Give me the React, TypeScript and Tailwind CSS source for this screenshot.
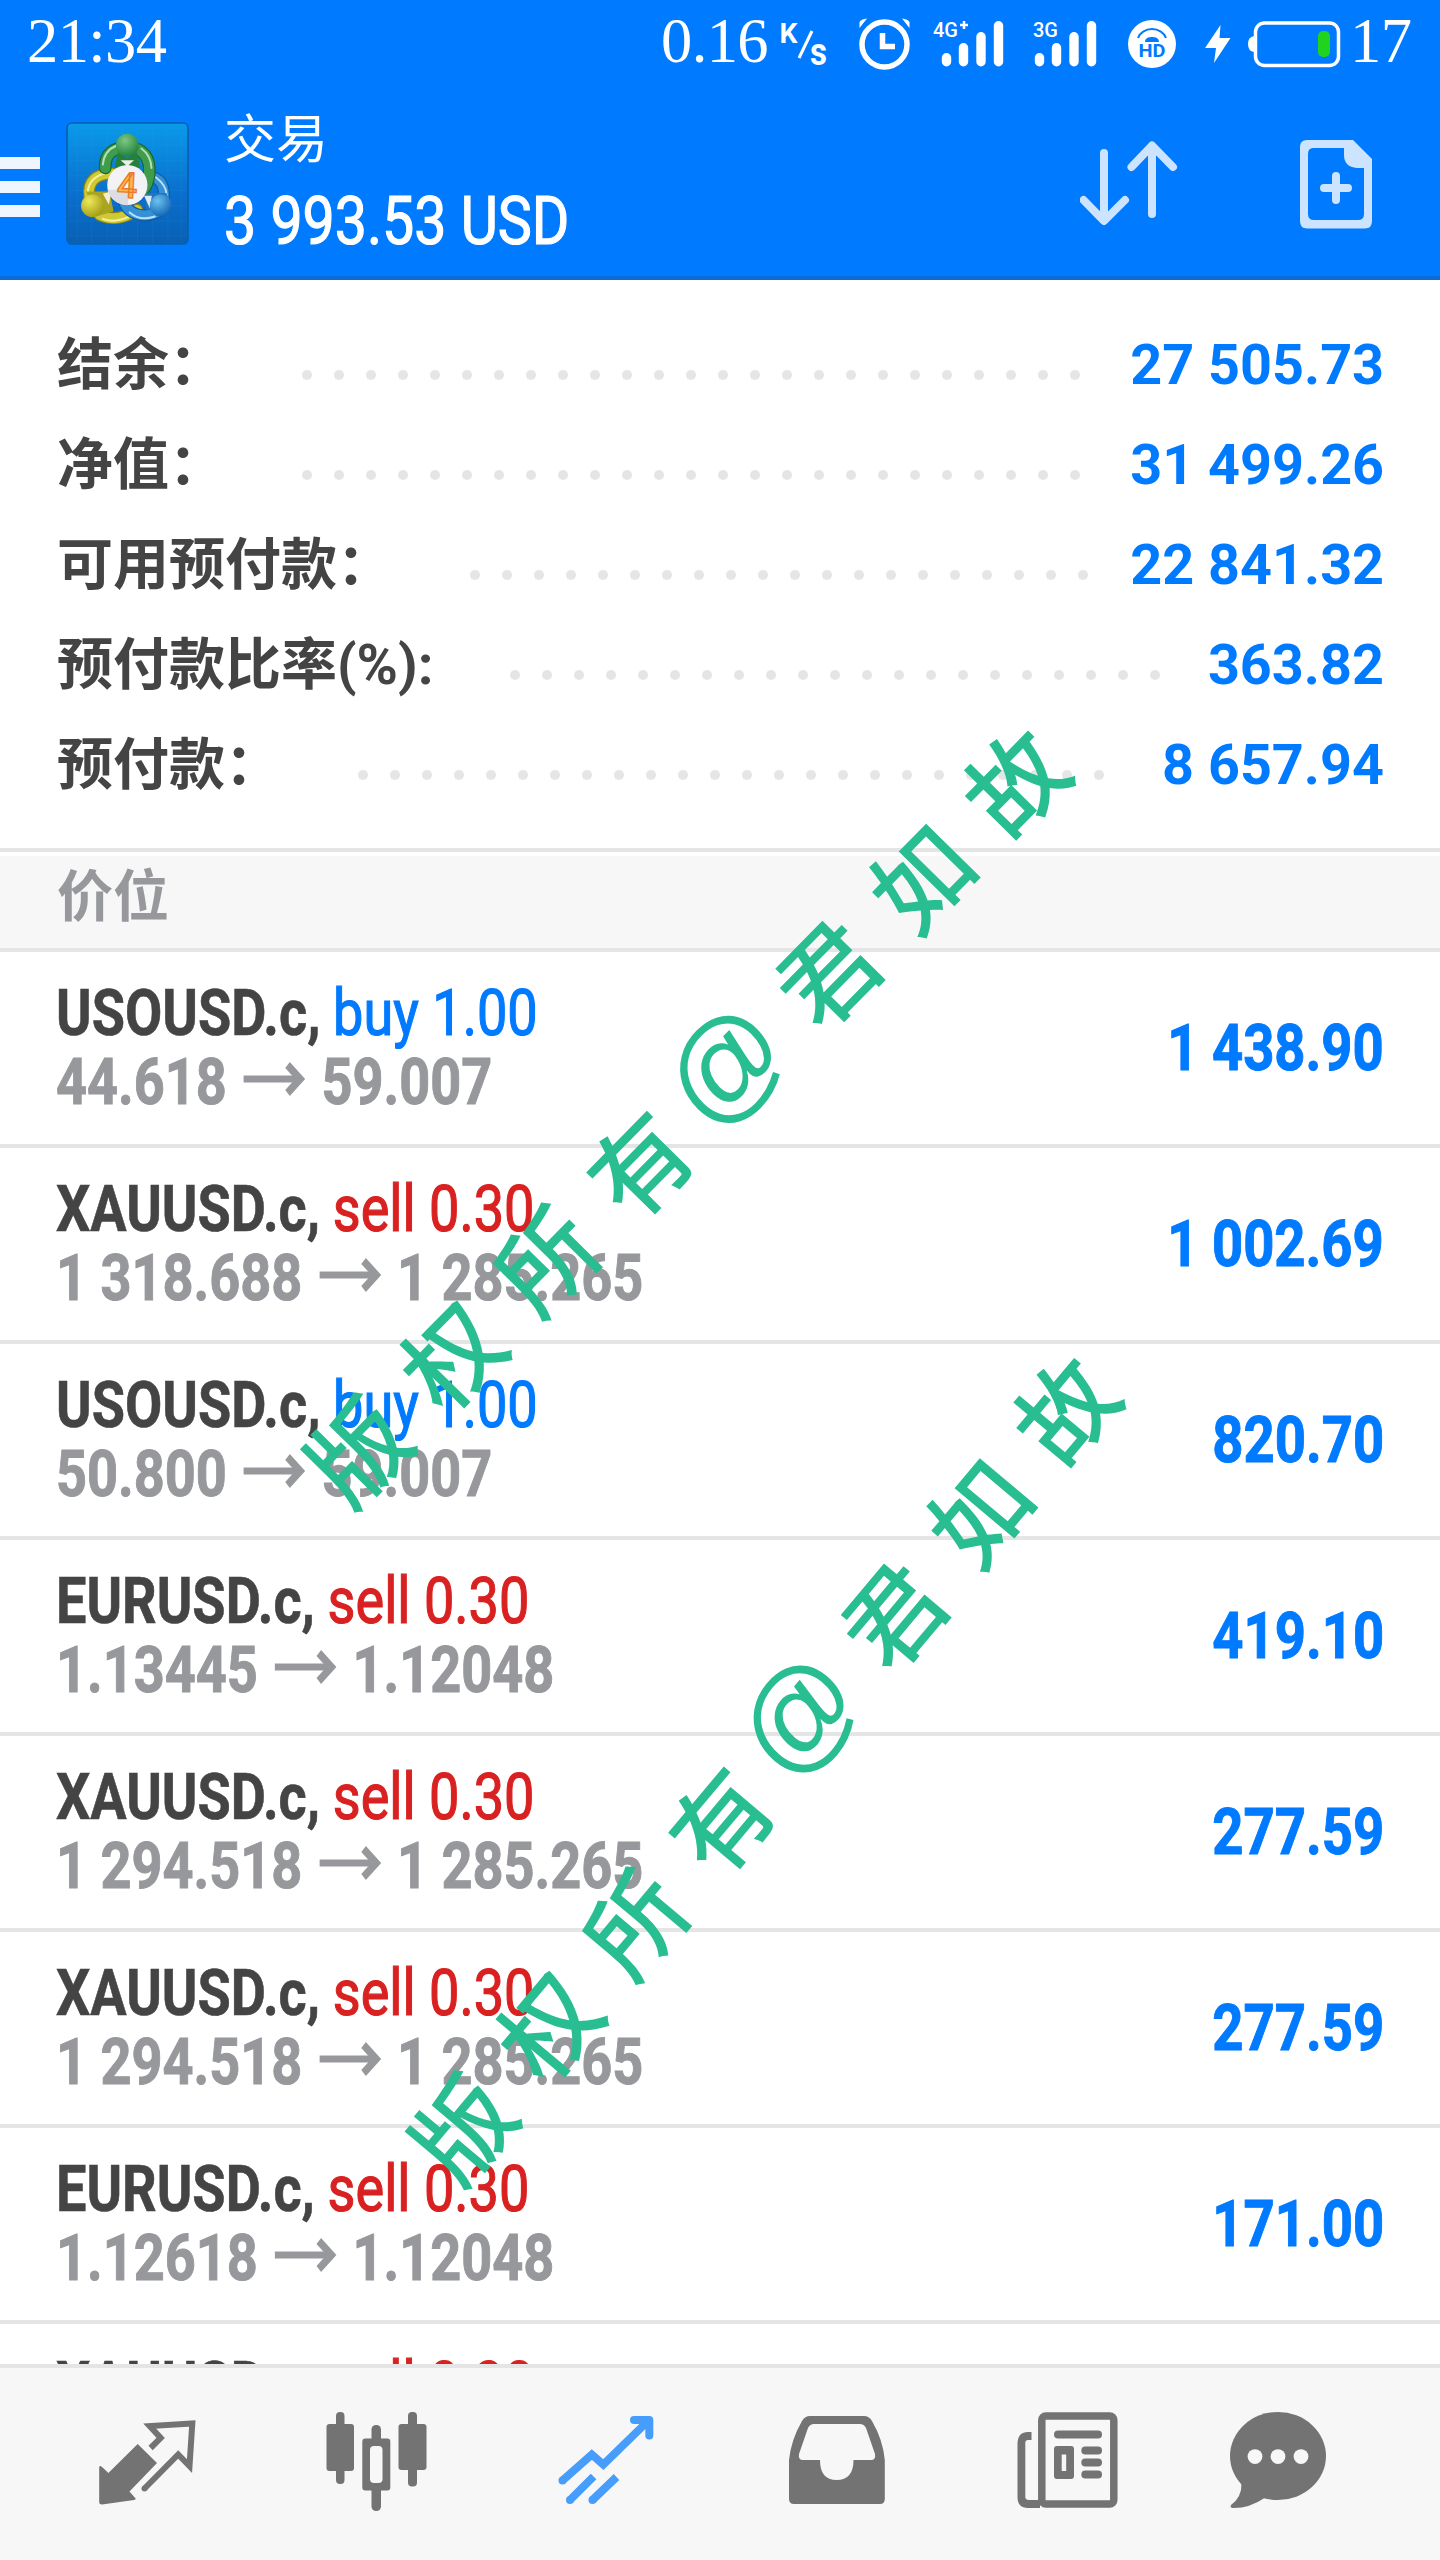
type Position = {
  symbol: string;
  side: 'buy' | 'sell';
  volume: string;
  open: string;
  current: string;
  profit: string;
};

const summary = [
  { label: '结余：', value: '27 505.73', dots: 25 },
  { label: '净值：', value: '31 499.26', dots: 25 },
  { label: '可用预付款：', value: '22 841.32', dots: 20 },
  { label: '预付款比率(%):', value: '363.82', dots: 21 },
  { label: '预付款：', value: '8 657.94', dots: 24 },
];

const positions: Position[] = [
  { symbol: 'USOUSD.c', side: 'buy', volume: '1.00', open: '44.618', current: '59.007', profit: '1 438.90' },
  { symbol: 'XAUUSD.c', side: 'sell', volume: '0.30', open: '1 318.688', current: '1 285.265', profit: '1 002.69' },
  { symbol: 'USOUSD.c', side: 'buy', volume: '1.00', open: '50.800', current: '59.007', profit: '820.70' },
  { symbol: 'EURUSD.c', side: 'sell', volume: '0.30', open: '1.13445', current: '1.12048', profit: '419.10' },
  { symbol: 'XAUUSD.c', side: 'sell', volume: '0.30', open: '1 294.518', current: '1 285.265', profit: '277.59' },
  { symbol: 'XAUUSD.c', side: 'sell', volume: '0.30', open: '1 294.518', current: '1 285.265', profit: '277.59' },
  { symbol: 'EURUSD.c', side: 'sell', volume: '0.30', open: '1.12618', current: '1.12048', profit: '171.00' },
  { symbol: 'XAUUSD.c', side: 'sell', volume: '0.30', open: '', current: '', profit: '' },
];

function SignalBars({ xs }: { xs: number[] }) {
  const tops = [53, 43, 32, 21];
  return (
    <>
      {xs.map((x, i) => (
        <rect key={x} x={x - 4.7} y={tops[i]} width="9.4" height={66.5 - tops[i]} rx="4.7" />
      ))}
    </>
  );
}

function StatusBar() {
  return (
    <div className="flex h-[82px] items-center pl-[27px] pr-[27px] font-['Liberation_Serif',serif] text-[62.5px] leading-none tracking-[-0.6px] text-white">
      <span>21:34</span>
      <span className="ml-auto w-[111px]">0.16</span>

      {/* Network speed unit */}
      <svg width="78" height="82" viewBox="772 0 78 82" fill="#fff" fontFamily="Roboto, sans-serif" fontWeight="700" letterSpacing="0">
        <text x="779.500" y="43" fontSize="28" textLength="18" lengthAdjust="spacingAndGlyphs">K</text>
        <path d="M799 58 812 31" stroke="#fff" strokeWidth="3" />
        <text x="810" y="64.500" fontSize="39" textLength="17" lengthAdjust="spacingAndGlyphs">s</text>
      </svg>

      {/* Alarm */}
      <svg width="70" height="82" viewBox="850 0 70 82" fill="none" stroke="#fff">
        <circle cx="884.500" cy="44.500" r="22.500" strokeWidth="5.500" />
        <path d="M882.500 33V46.500H895" strokeWidth="5.500" />
        <path d="M859.500 28V22Q861 19 867 18.500ZM909.500 28V22Q908 19 902 18.500Z" fill="#fff" stroke="none" />
      </svg>

      {/* Signal */}
      <svg width="100" height="82" viewBox="920 0 100 82" fill="#fff" fontFamily="Roboto, sans-serif" fontWeight="500" letterSpacing="0">
        <text x="933" y="36.500" fontSize="20" textLength="25" lengthAdjust="spacingAndGlyphs">4G</text>
        <path d="M964 21V29M960 25H968" stroke="#fff" strokeWidth="2.500" />
        <SignalBars xs={[946.5, 963.5, 981, 998.5]} />
      </svg>
      <svg width="95" height="82" viewBox="1020 0 95 82" fill="#fff" fontFamily="Roboto, sans-serif" fontWeight="500" letterSpacing="0">
        <text x="1033" y="36.500" fontSize="20" textLength="25" lengthAdjust="spacingAndGlyphs">3G</text>
        <SignalBars xs={[1039.5, 1056.5, 1074, 1091.5]} />
      </svg>

      {/* HD voice */}
      <svg width="75" height="82" viewBox="1115 0 75 82" letterSpacing="0">
        <circle cx="1152" cy="44" r="24" fill="#fff" />
        <path d="M1138 38A14.500 12 0 0 1 1166 38" fill="none" stroke="#007aff" strokeWidth="2" />
        <path d="M1145 42Q1145 37 1152 37Q1159 37 1159 42Z" fill="#007aff" />
        <text x="1138.500" y="57" fontSize="18" fontWeight="700" fill="#007aff" fontFamily="Roboto, sans-serif" textLength="27" lengthAdjust="spacingAndGlyphs">HD</text>
      </svg>

      {/* Battery */}
      <svg width="50" height="82" viewBox="1190 0 50 82" fill="#fff">
        <path d="M1220.500 25 1205 48H1216L1214 63 1230.500 38H1219.500Z" />
      </svg>
      <svg width="110" height="82" viewBox="1240 0 110 82">
        <path d="M1254 36Q1248 37 1248 44Q1248 51 1254 52Z" fill="#fff" />
        <rect x="1255.500" y="23" width="83" height="42.500" rx="9" fill="none" stroke="#fff" strokeWidth="3.500" />
        <rect x="1318" y="31" width="12" height="26" rx="5" fill="#20d31c" />
      </svg>
      <span className="w-[63px]">17</span>
    </div>
  );
}

function AppLogo() {
  return (
    <svg width="123" height="123" viewBox="50 38 367 367">
      <defs>
        <linearGradient id="tile" x1="0" y1="0" x2="0" y2="1">
          <stop offset="0" stopColor="#0a9aea" />
          <stop offset="0.6" stopColor="#0a6ecc" />
          <stop offset="1" stopColor="#0860b4" />
        </linearGradient>
        <radialGradient id="green" cx="0.4" cy="0.3" r="0.8">
          <stop offset="0" stopColor="#7cc884" />
          <stop offset="1" stopColor="#167a35" />
        </radialGradient>
        <radialGradient id="yellow" cx="0.35" cy="0.3" r="0.8">
          <stop offset="0" stopColor="#eee85a" />
          <stop offset="1" stopColor="#9a9610" />
        </radialGradient>
        <radialGradient id="blue" cx="0.35" cy="0.3" r="0.8">
          <stop offset="0" stopColor="#6cc2f0" />
          <stop offset="1" stopColor="#0a5cae" />
        </radialGradient>
      </defs>
      <rect x="53" y="41" width="361" height="361" rx="14" fill="url(#tile)" stroke="#0a5fae" strokeWidth="5" />
      <path
        d="M83 44V400M127 44V400M173 44V400M218 44V400M263 44V400M309 44V400M354 44V400M394 44V400M56 72H412M56 107H412M56 152H412M56 197H412M56 243H412M56 288H412M56 333H412M56 378H412"
        stroke="#3db1f0"
        strokeOpacity="0.16"
        strokeWidth="2"
      />
      <g fill="none" strokeLinecap="round">
        <path d="M120 262C112 215 140 192 188 192M150 315C185 332 225 326 262 300" stroke="#8c8510" strokeWidth="36" />
        <path d="M120 262C112 215 140 192 188 192M150 315C185 332 225 326 262 300" stroke="#cfc936" strokeWidth="29" />
        <path d="M115 245C118 215 140 197 170 190M160 327C185 337 215 332 235 322" stroke="#f4f1a0" strokeWidth="6" />
        <path d="M290 198C335 203 345 228 342 270M225 282C240 315 285 327 325 306" stroke="#115a9e" strokeWidth="36" />
        <path d="M290 198C335 203 345 228 342 270M225 282C240 315 285 327 325 306" stroke="#3690d6" strokeWidth="29" />
        <path d="M318 203C340 220 350 235 350 255M240 308C260 326 285 330 315 320" stroke="#b4e0fa" strokeWidth="6" />
        <path d="M167 175C165 130 195 114 233 114C280 114 303 145 298 195C295 215 290 230 280 240" stroke="#15682c" strokeWidth="38" />
        <path d="M167 175C165 130 195 114 233 114C280 114 303 145 298 195C295 215 290 230 280 240" stroke="#3f9c4c" strokeWidth="31" />
        <path d="M160 165C163 135 180 117 200 109M275 117C293 130 304 148 305 175" stroke="#b5dfb4" strokeWidth="6" />
      </g>
      <path d="M205 128 233 146 262 128 272 175H195Z" fill="#287f3a" />
      <path d="M213 152H253L233 170Z" fill="#e9efe6" />
      <path d="M110 245 180 245 192 305 140 320Z" fill="#aaa420" />
      <path d="M160 252 185 245 178 285Z" fill="#efefd8" />
      <path d="M285 250 350 250 360 305 290 300Z" fill="#2476bb" />
      <path d="M283 258 306 258 300 295Z" fill="#dfeaf2" />
      <circle cx="233" cy="107" r="34" fill="url(#green)" />
      <circle cx="129" cy="288" r="34" fill="url(#yellow)" />
      <circle cx="333" cy="287" r="33" fill="url(#blue)" />
      <circle cx="233" cy="226" r="60" fill="#f3f3f5" />
      <path d="M174 240H235V286A60 60 0 0 1 174 240Z" fill="#dcdce2" />
      <text x="203" y="264" fontFamily="Roboto, sans-serif" fontSize="106" fontWeight="500" fill="#ffb74a" stroke="#e8792c" strokeWidth="4" transform="rotate(3 233 226)">4</text>
    </svg>
  );
}

function Header() {
  return (
    <header className="h-[280px] border-b-4 border-[#0b6cd6] bg-[#007aff]">
      <StatusBar />
      <div className="flex h-[194px] items-start">
        <div className="flex w-10 flex-col gap-3 pt-[75px]">
          <span className="h-3 bg-[#eef7ff]" />
          <span className="h-3 bg-[#eef7ff]" />
          <span className="h-3 bg-[#eef7ff]" />
        </div>
        <div className="ml-[26px] pt-[40px]">
          <AppLogo />
        </div>
        <div className="ml-[35px] w-[600px] pt-[19px] text-white">
          <div className="h-[70px] font-['Noto_Sans_CJK_SC',sans-serif] text-[52px] leading-[70px]">交易</div>
          <div className="origin-left scale-x-[0.855] whitespace-nowrap font-[Roboto,sans-serif] text-[67px] leading-[100px] [-webkit-text-stroke:1.2px_currentColor]">
            3 993.53 USD
          </div>
        </div>
        <svg className="ml-auto" width="360" height="194" viewBox="1080 82 360 194">
          <g fill="none" stroke="#cce4ff" strokeWidth="8" strokeLinecap="round" strokeLinejoin="round">
            <path d="M1104 153V220M1083.500 200 1104 221 1125 200" />
            <path d="M1152 214V146M1131.500 167 1152 145.500 1173 167" />
          </g>
          <path
            fill="#cce4ff"
            fillRule="evenodd"
            d="M1307 140H1353L1372 159V221Q1372 228.500 1365 228.500H1307Q1300 228.500 1300 221V147Q1300 140 1307 140ZM1313 148Q1308 148 1308 154V214Q1308 220 1314 220H1358Q1364 220 1364 214V168H1357Q1344 167 1344 155V148Z"
          />
          <path d="M1324 188H1348M1336 176V200" stroke="#cce4ff" strokeWidth="8" strokeLinecap="round" />
        </svg>
      </div>
    </header>
  );
}

function Summary() {
  return (
    <section className="h-[572px] border-b-4 border-[#e5e5e5] pl-[57px] pr-[56px] pt-[35px]">
      {summary.map((row) => (
        <div
          key={row.label}
          className="flex h-[100px] items-center whitespace-nowrap font-[Roboto,'Noto_Sans_CJK_SC',sans-serif] text-[56px] font-bold leading-[100px]"
        >
          <span className="text-[#444444]">{row.label}</span>
          <div className="ml-[77px] mt-[19px] flex gap-[22px]">
            {Array.from({ length: row.dots }, (_, i) => (
              <span key={i} className="size-[10px] rounded-full bg-[#e5e5e5]" />
            ))}
          </div>
          <span className="ml-auto origin-right scale-x-[0.995] text-[#007aff]">{row.value}</span>
        </div>
      ))}
    </section>
  );
}

function PositionRow({ position }: { position: Position }) {
  return (
    <div className="flex h-[196px] shrink-0 items-center justify-between border-b-4 border-[#e5e5e5] pl-[56px] pr-[56px] text-[64px] leading-[69px]">
      <div className="origin-left scale-x-[0.845] whitespace-nowrap">
        <div>
          <span className="font-bold text-[#444444] [-webkit-text-stroke:0.6px_currentColor]">{position.symbol},</span>
          <span
            className={`ml-[15px] [-webkit-text-stroke:1.2px_currentColor] ${position.side === 'buy' ? 'text-[#007aff]' : 'text-[#d92121]'}`}
          >
            {position.side} {position.volume}
          </span>
        </div>
        <div className="flex h-[69px] items-center gap-[15px] font-bold text-[#97989c] [-webkit-text-stroke:1px_currentColor]">
          <span>{position.open}</span>
          <svg width="82" height="48" viewBox="0 0 82 48" fill="none" stroke="currentColor">
            <path d="M5 20H70" strokeWidth="7" />
            <path d="M57 6 72 20 57 34" strokeWidth="8" />
          </svg>
          <span>{position.current}</span>
        </div>
      </div>
      <span className="origin-right scale-x-[0.85] font-bold text-[#007aff] [-webkit-text-stroke:1px_currentColor]">
        {position.profit}
      </span>
    </div>
  );
}

function BottomNav() {
  return (
    <nav className="grid h-[196px] shrink-0 grid-cols-6 border-t-4 border-[#e5e5e5] bg-[#f7f7f7]">
      {/* Quotes */}
      <svg width="240" height="192" viewBox="0 2368 240 192">
        <path d="M137.700 2444 157 2463 129.500 2491.500 136 2499 134 2500 102 2504.500Q99.200 2504.500 99.200 2502V2467Q100 2465 102 2467L108.400 2473Z" fill="#737373" />
        <path d="M150.600 2448 160.700 2438 149.700 2426 192.300 2423.500 189.500 2466 178.200 2454.500 145 2488" fill="none" stroke="#737373" strokeWidth="6" />
        <circle cx="144.500" cy="2488.500" r="3" fill="#737373" />
      </svg>

      {/* Chart */}
      <svg width="240" height="192" viewBox="240 2368 240 192" fill="#737373">
        <rect x="336" y="2412" width="8.500" height="72" rx="4" />
        <rect x="326.500" y="2424" width="27.500" height="47" rx="3" />
        <rect x="408" y="2412" width="9" height="74.500" rx="4" />
        <rect x="398.500" y="2424" width="28" height="46" rx="3" />
        <rect x="371.500" y="2425" width="9.500" height="86" rx="4.500" />
        <rect x="362.300" y="2438.500" width="28" height="52" rx="3" />
        <rect x="370" y="2446" width="12.500" height="37" rx="4" fill="#f7f7f7" />
      </svg>

      {/* Trade */}
      <svg width="240" height="192" viewBox="480 2368 240 192" fill="none" stroke="#469dfb" strokeWidth="8">
        <path d="M562.500 2480.500 591.800 2454.500 603.300 2464.500 646 2423" />
        <path d="M634 2420H649.300V2435.500" strokeLinecap="round" strokeLinejoin="round" />
        <path d="M638 2420 649 2432V2420Z" fill="#469dfb" stroke="none" />
        <path d="M570 2500 593.600 2476.500M592.500 2500 616.500 2477" />
        <g fill="#469dfb" stroke="none">
          <circle cx="562.500" cy="2480.500" r="4" />
          <circle cx="570" cy="2500" r="4" />
          <circle cx="592.500" cy="2500" r="4" />
        </g>
      </svg>

      {/* History */}
      <svg width="240" height="192" viewBox="720 2368 240 192">
        <path
          fill="#737373"
          fillRule="evenodd"
          d="M810 2416H864Q869 2416 872 2421Q883 2440 884.800 2460V2499Q884.800 2504 880 2504H794Q789 2504 789 2499V2460Q791 2440 802 2421Q805 2416 810 2416ZM814 2424Q810 2424 808 2428L799 2454Q798 2460 803 2460H820Q820 2480 836.600 2480Q853.500 2480 853.500 2460H871Q876 2460 875 2454L866 2428Q864 2424 860 2424Z"
        />
      </svg>

      {/* News */}
      <svg width="240" height="192" viewBox="960 2368 240 192" fill="#737373">
        <rect x="1041.800" y="2416" width="72" height="88" rx="4" fill="none" stroke="#737373" strokeWidth="7.500" />
        <path d="M1031.500 2432V2440H1028Q1025.300 2440 1025.300 2443V2497Q1025.300 2500 1029 2500H1040V2508H1028Q1017.500 2508 1017.500 2497V2443Q1018 2432 1028 2432Z" />
        <rect x="1054" y="2430.500" width="48" height="8" rx="4" />
        <path fillRule="evenodd" d="M1057 2446H1071Q1074 2446 1074 2449V2476Q1074 2479 1071 2479H1057Q1054 2479 1054 2476V2449Q1054 2446 1057 2446ZM1061.700 2454.500V2471H1066.200V2454.500Z" />
        <rect x="1081.300" y="2446.500" width="20.700" height="8" rx="4" />
        <rect x="1081.300" y="2458.600" width="20.700" height="8" rx="4" />
        <rect x="1081.300" y="2470.600" width="20.700" height="8" rx="4" />
      </svg>

      {/* Messages */}
      <svg width="240" height="192" viewBox="1200 2368 240 192" fill="#737373">
        <ellipse cx="1278" cy="2456" rx="48" ry="44" />
        <path d="M1241.500 2483Q1242 2497 1231 2505Q1229.500 2508 1233.500 2508Q1250 2508 1264.500 2498Z" />
        <g fill="#f7f7f7">
          <circle cx="1255" cy="2456.600" r="7.400" />
          <circle cx="1278" cy="2456.600" r="7.400" />
          <circle cx="1301" cy="2456.600" r="7.400" />
        </g>
      </svg>
    </nav>
  );
}

function Watermark({ className }: { className: string }) {
  return (
    <div
      className={`pointer-events-none absolute flex h-[120px] w-[1072px] items-center font-['Noto_Sans_CJK_SC',sans-serif] text-[98px] font-medium leading-none text-[#29bd92] ${className}`}
    >
      {Array.from('版权所有@君如故').map((char) => (
        <span
          key={char}
          className={
            char === '@'
              ? "w-[134px] -translate-x-1 -translate-y-1 text-center font-['Liberation_Sans',sans-serif] text-[116px] font-normal"
              : 'w-[134px] text-center'
          }
        >
          {char}
        </span>
      ))}
    </div>
  );
}

export default function App() {
  return (
    <div className="relative flex h-[2560px] w-[1440px] flex-col overflow-hidden bg-white font-[Roboto,'Noto_Sans_CJK_SC',sans-serif]">
      <Header />
      <Summary />
      <div className="mt-1 h-24 shrink-0 border-b-4 border-[#e5e5e5] bg-[#f7f7f7] pl-[57px] text-[56px] font-bold leading-[82px] text-[#97989c]">
        价位
      </div>
      <main className="flex min-h-0 flex-1 flex-col overflow-hidden">
        {positions.map((position, i) => (
          <PositionRow key={i} position={position} />
        ))}
      </main>
      <BottomNav />

      <Watermark className="left-[147px] top-[1053px] rotate-[-45.5deg]" />
      <Watermark className="left-[224px] top-[1706px] rotate-[-50deg]" />
    </div>
  );
}
